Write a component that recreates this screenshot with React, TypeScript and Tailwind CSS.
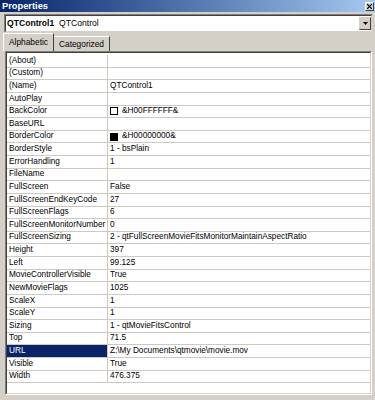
import React from "react";

type Row = { name: string; value?: string; swatch?: "white" | "black"; selected?: boolean };

const rows: Row[] = [
  { name: "(About)" },
  { name: "(Custom)" },
  { name: "(Name)", value: "QTControl1" },
  { name: "AutoPlay" },
  { name: "BackColor", value: "&H00FFFFFF&", swatch: "white" },
  { name: "BaseURL" },
  { name: "BorderColor", value: "&H00000000&", swatch: "black" },
  { name: "BorderStyle", value: "1 - bsPlain" },
  { name: "ErrorHandling", value: "1" },
  { name: "FileName" },
  { name: "FullScreen", value: "False" },
  { name: "FullScreenEndKeyCode", value: "27" },
  { name: "FullScreenFlags", value: "6" },
  { name: "FullScreenMonitorNumber", value: "0" },
  { name: "FullScreenSizing", value: "2 - qtFullScreenMovieFitsMonitorMaintainAspectRatio" },
  { name: "Height", value: "397" },
  { name: "Left", value: "99.125" },
  { name: "MovieControllerVisible", value: "True" },
  { name: "NewMovieFlags", value: "1025" },
  { name: "ScaleX", value: "1" },
  { name: "ScaleY", value: "1" },
  { name: "Sizing", value: "1 - qtMovieFitsControl" },
  { name: "Top", value: "71.5" },
  { name: "URL", value: "Z:\\My Documents\\qtmovie\\movie.mov", selected: true },
  { name: "Visible", value: "True" },
  { name: "Width", value: "476.375" },
];

export default function App() {
  return (
    <div
      className="w-[375px] h-[400px] bg-[#d4d0c8] flex flex-col overflow-hidden text-black"
      style={{ fontFamily: '"Liberation Sans", Arial, sans-serif' }}
    >
      {/* Title bar */}
      <div className="h-[12px] flex items-center justify-between pl-[2px] pr-[1px] bg-gradient-to-r from-[#0a246a] to-[#a6caf0]">
        <span className="text-white font-bold text-[9.3px] leading-[12px]">Properties</span>
        <div className="w-[9px] h-[9px] bg-[#d4d0c8] border-t border-l border-white border-r border-b border-r-[#404040] border-b-[#404040] flex items-center justify-center">
          <svg width="5" height="5" viewBox="0 0 5 5">
            <path d="M0 0L5 5M5 0L0 5" stroke="#000" strokeWidth="1.2" />
          </svg>
        </div>
      </div>

      {/* Dropdown */}
      <div className="mt-[2px] ml-[4px] mr-[3px] h-[18px] border-t border-l border-[#808080] border-r-white border-b-white">
        <div className="h-full border-t border-l border-[#404040] border-r border-b border-r-[#d4d0c8] border-b-[#d4d0c8] bg-white flex items-center">
          <div className="flex-1 pl-[1px] text-[8.6px] leading-none whitespace-nowrap">
            <span className="font-bold">QTControl1</span>
            <span>&nbsp; QTControl</span>
          </div>
          <div className="w-[12px] h-[13px] bg-[#d4d0c8] border-t border-l border-[#d4d0c8] border-r border-b border-r-[#404040] border-b-[#404040] flex items-center justify-center">
            <svg width="5" height="3" viewBox="0 0 5 3">
              <path d="M0 0H5L2.5 3Z" fill="#000" />
            </svg>
          </div>
        </div>
      </div>

      {/* Tabs */}
      <div className="h-[18px] mt-[1px] pl-[3px] flex items-end text-[8.35px]">
        <div className="w-[51px] h-[18px] border-t border-l border-white border-r border-r-[#404040] rounded-tl-[1px] flex items-center justify-center relative z-10">
          <span className="leading-none -mt-[1px]">Alphabetic</span>
        </div>
        <div className="w-[56px] h-[15px] border-t border-white border-r border-r-[#404040] flex items-center justify-center">
          <span className="leading-none">Categorized</span>
        </div>
      </div>

      {/* Grid */}
      <div className="flex-1 ml-[5px] mr-[3px] mb-[5px] border-t border-l border-[#808080] border-r border-b border-r-white border-b-white">
        <div className="h-full border-t border-l border-[#404040] border-r border-b border-r-[#d4d0c8] border-b-[#d4d0c8] bg-white pt-[2px] overflow-hidden">
          {rows.map((r) => (
            <div
              key={r.name}
              className="h-[12.63px] flex border-b border-[#cdc9c1] text-[8.25px] leading-none whitespace-nowrap"
            >
              <div
                className={
                  "w-[101px] shrink-0 border-r border-[#cdc9c1] pl-[2px] flex items-center overflow-hidden " +
                  (r.selected ? "bg-[#0a246a] text-white" : "")
                }
              >
                {r.name}
              </div>
              <div className="flex-1 pl-[2px] flex items-center overflow-hidden">
                {r.swatch && (
                  <span
                    className={
                      "w-[8px] h-[8px] mr-[4px] border border-black shrink-0 " +
                      (r.swatch === "black" ? "bg-black" : "bg-white")
                    }
                  />
                )}
                {r.value}
              </div>
            </div>
          ))}
        </div>
      </div>
    </div>
  );
}
